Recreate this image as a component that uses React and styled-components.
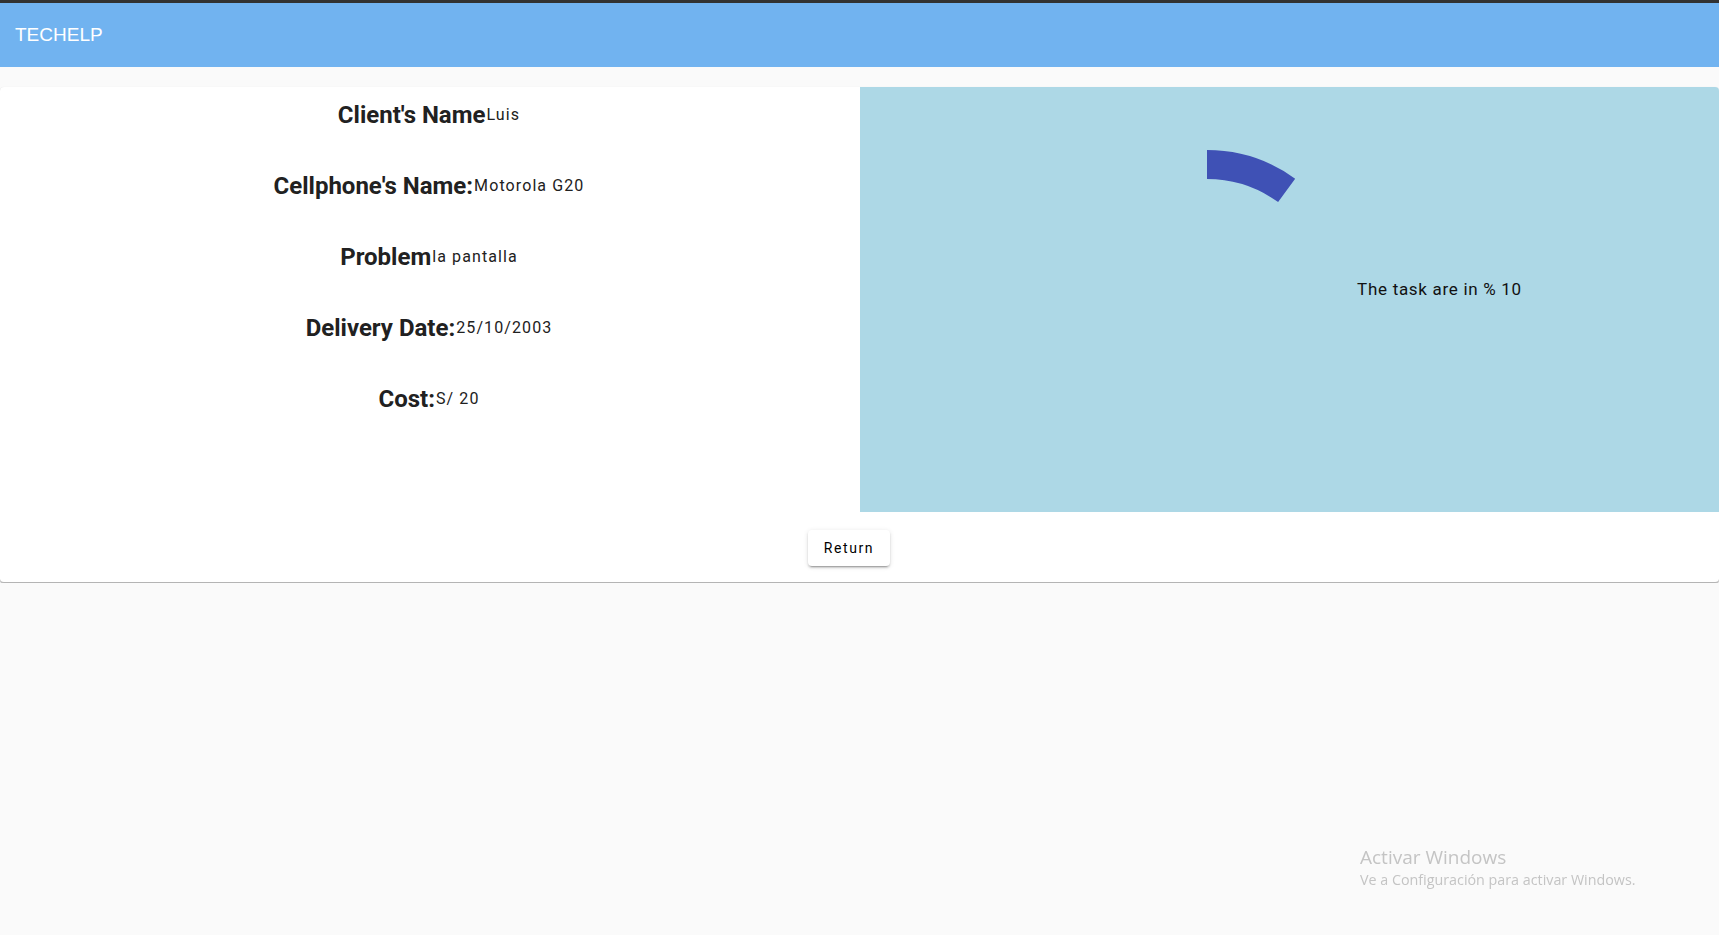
import React from "react"
import styled, { createGlobalStyle } from "styled-components"

const GlobalStyle = createGlobalStyle`
  body {
    margin: 0;
    background: #fafafa;
    font-family: Roboto, "Liberation Sans", sans-serif;
  }
`

const details = [
  { label: "Client's Name", value: "Luis" },
  { label: "Cellphone's Name:", value: "Motorola G20" },
  { label: "Problem", value: "la pantalla" },
  { label: "Delivery Date:", value: "25/10/2003" },
  { label: "Cost:", value: "S/ 20" },
]

const Progress = ({ value, size = 300, thickness = 29 }) => {
  const c = size / 2
  const r = c - thickness / 2
  const angle = (value / 100) * 2 * Math.PI
  const x = c + r * Math.sin(angle)
  const y = c - r * Math.cos(angle)
  return (
    <svg width={size} height={size} viewBox={`0 0 ${size} ${size}`}>
      <path
        d={`M${c} ${c - r} A${r} ${r} 0 ${value > 50 ? 1 : 0} 1 ${x} ${y}`}
        fill="none"
        stroke="#3f51b5"
        strokeWidth={thickness}
      />
    </svg>
  )
}

const App = () => {
  const progress = 10
  return (
    <>
      <GlobalStyle />
      <TopEdge />
      <AppBar>
        <Brand>TECHELP</Brand>
      </AppBar>
      <Card>
        <Columns>
          <DetailList>
            {details.map((d) => (
              <DetailRow key={d.label}>
                <Label>{d.label}</Label>
                <Value>{d.value}</Value>
              </DetailRow>
            ))}
          </DetailList>
          <ProgressPanel>
            <Progress value={progress} />
            <ProgressText>The task are in % {progress}</ProgressText>
          </ProgressPanel>
        </Columns>
        <Actions>
          <ReturnButton>Return</ReturnButton>
        </Actions>
      </Card>
      <Watermark>
        <WatermarkTitle>Activar Windows</WatermarkTitle>
        <WatermarkSub>Ve a Configuración para activar Windows.</WatermarkSub>
      </Watermark>
    </>
  )
}

export default App

const TopEdge = styled.div`
  height: 3px;
  background: #323232;
`

const AppBar = styled.header`
  height: 64px;
  display: flex;
  align-items: center;
  padding: 0 15px;
  background: #71b3f0;
`

const Brand = styled.span`
  font-family: "Liberation Sans", Arial, sans-serif;
  font-size: 19px;
  color: #fff;
`

const Card = styled.section`
  margin-top: 20px;
  background: #fff;
  border-radius: 4px;
  border-bottom: 1px solid #b4b4b4;
  box-shadow: 0px 1px 1px 0px rgba(0, 0, 0, 0.2),
    0px 0px 1px 0px rgba(0, 0, 0, 0.1);
  overflow: hidden;
`

const Columns = styled.div`
  display: grid;
  grid-template-columns: 860px 1fr;
  height: 425px;
`

const DetailList = styled.div`
  display: flex;
  flex-direction: column;
  gap: 40px;
  padding-top: 13px;
  padding-right: 2px;
`

const DetailRow = styled.div`
  display: flex;
  justify-content: center;
  align-items: flex-start;
  color: #212121;
`

const Label = styled.span`
  font-size: 24px;
  font-weight: 700;
  line-height: 31px;
`

const Value = styled.span`
  font-size: 16px;
  line-height: 29px;
  letter-spacing: 1.1px;
  margin-left: 1px;
`

const ProgressPanel = styled.div`
  display: flex;
  align-items: center;
  justify-content: center;
  background: #add8e6;
`

const ProgressText = styled.p`
  margin: 0 0 22px;
  font-size: 17px;
  letter-spacing: 0.7px;
  color: #111;
`

const Actions = styled.div`
  display: flex;
  justify-content: center;
  padding: 18px 21px 16px 0;
`

const ReturnButton = styled.button`
  height: 36px;
  width: 82px;
  border: none;
  border-radius: 4px;
  background: #fff;
  font-family: Roboto, sans-serif;
  font-size: 14px;
  font-weight: 400;
  letter-spacing: 1.6px;
  color: #000;
  box-shadow: 0px 3px 1px -2px rgba(0, 0, 0, 0.2),
    0px 2px 2px 0px rgba(0, 0, 0, 0.14), 0px 1px 5px 0px rgba(0, 0, 0, 0.12);
  cursor: pointer;
`

const Watermark = styled.div`
  position: fixed;
  left: 1360px;
  top: 844px;
  font-family: "Open Sans", sans-serif;
  color: #c4c4c4;
`

const WatermarkTitle = styled.div`
  font-size: 19px;
  line-height: 26px;
`

const WatermarkSub = styled.div`
  font-size: 14.3px;
  line-height: 20px;
`
